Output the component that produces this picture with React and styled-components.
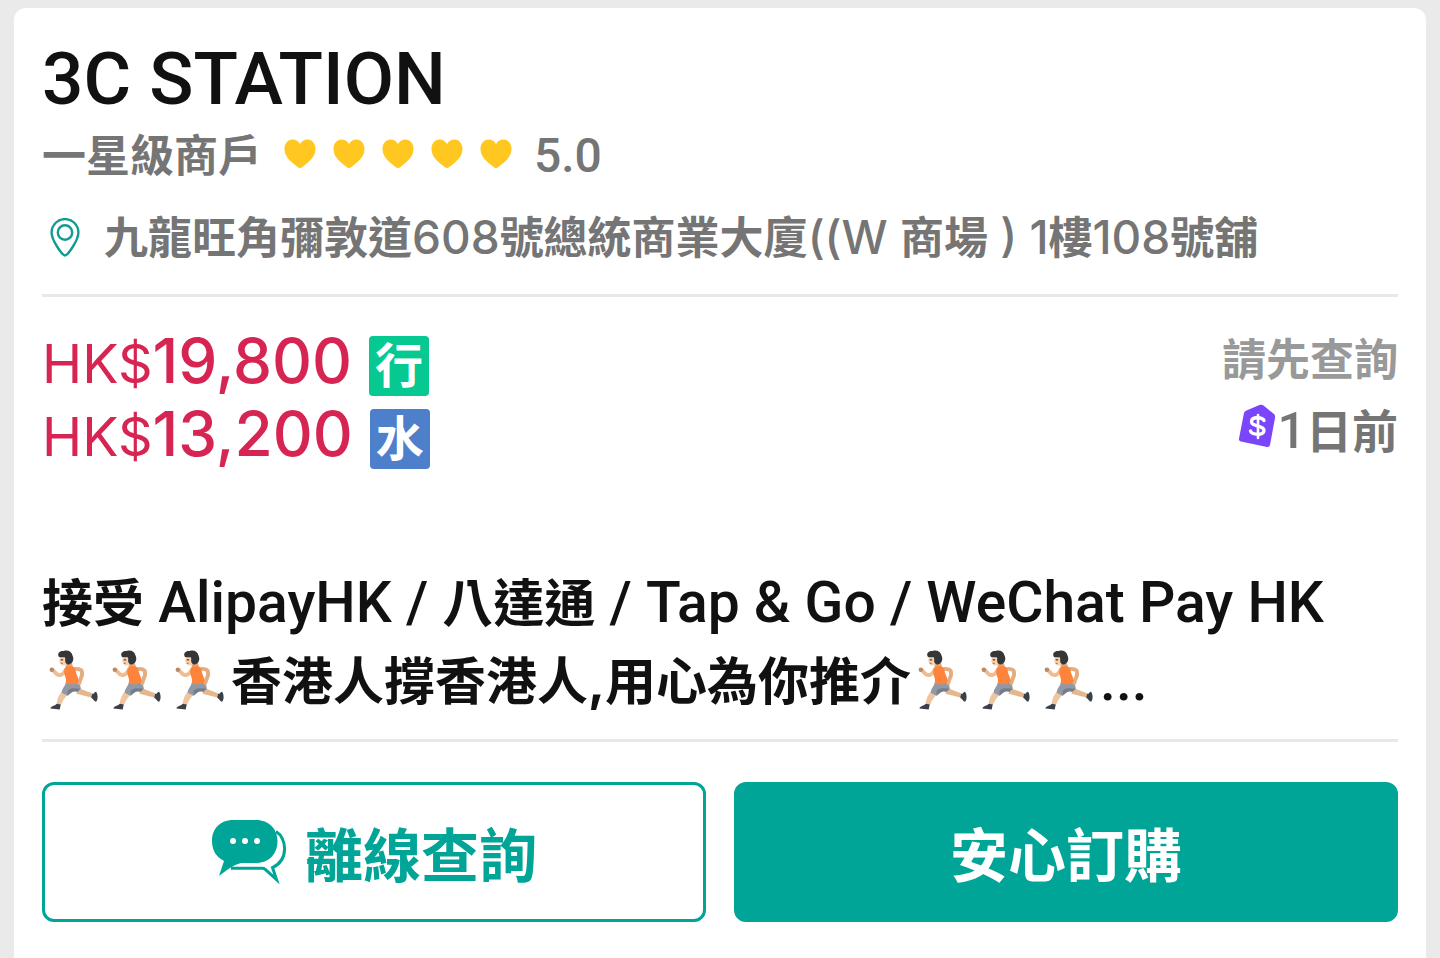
import React from 'react';
import styled, { createGlobalStyle } from 'styled-components';

const App = () => {
  return (
    <>
      <GlobalStyle />
      <Card>
        <Title>3C STATION</Title>
        <RatingRow>
          <span>一星級商戶</span>
          <Hearts role="img" aria-label="5 / 5">
            {[1, 2, 3, 4, 5].map((n) => (
              <HeartIcon key={n} />
            ))}
          </Hearts>
          <Latin $size={48}>5.0</Latin>
        </RatingRow>
        <AddressRow>
          <PinIcon />
          <span>
            九龍旺角彌敦道<AddressLatin>608</AddressLatin>號總統商業大廈
            <AddressLatin>((W </AddressLatin>商場<AddressLatin> ) 1</AddressLatin>樓
            <AddressLatin>108</AddressLatin>號舖
          </span>
        </AddressRow>

        <Divider />

        <PriceSection>
          <div>
            {prices.map((price) => (
              <PriceRow key={price.tag}>
                <span>
                  <Currency>HK$</Currency>
                  {price.amount}
                </span>
                <PriceTag $color={price.color}>{price.tag}</PriceTag>
              </PriceRow>
            ))}
          </div>
          <StockColumn>
            <StockText>請先查詢</StockText>
            <UpdatedText>
              <DollarTagIcon />
              <Latin $size={50}>1</Latin>
              日前
            </UpdatedText>
          </StockColumn>
        </PriceSection>

        <Description>
          接受<Latin $size={57}> AlipayHK / </Latin>八達通
          <Latin $size={57}> / Tap &amp; Go / WeChat Pay HK</Latin>
          <br />
          <RunnerIcon />
          <RunnerIcon />
          <RunnerIcon />
          香港人撐香港人,用心為你推介
          <RunnerIcon />
          <RunnerIcon />
          <RunnerIcon />
          <Latin $size={57}>...</Latin>
        </Description>

        <Divider />

        <Actions>
          <ActionButton type="button">
            <ChatIcon />
            離線查詢
          </ActionButton>
          <ActionButton type="button" $primary>
            安心訂購
          </ActionButton>
        </Actions>
      </Card>
    </>
  );
};

export default App;

const prices = [
  { amount: '19,800', tag: '行', color: '#05c990' },
  { amount: '13,200', tag: '水', color: '#4d7fcb' },
];

const HeartIcon = () => (
  <svg width="32" height="30" viewBox="0 0 32 30" aria-hidden="true">
    <path
      d="M16 29C14.500 29 12 27 8 23.500C3 19 .5 15 .5 9.500C.5 4.500 4 .5 8.500 .5C12 .5 14.500 2.500 16 5C17.500 2.500 20 .5 23.500 .5C28 .5 31.500 4.500 31.500 9.500C31.500 15 29 19 24 23.500C20 27 17.500 29 16 29Z"
      fill="#ffc720"
    />
  </svg>
);

const PinIcon = () => (
  <svg width="46" height="40" viewBox="0 0 46 40" fill="none" stroke="#109c90" strokeWidth="2.400" aria-hidden="true">
    <path d="M23 37.500C20.500 37.500 9.600 22.500 9.600 14.500A13.400 13.400 0 0 1 36.400 14.500C36.400 22.500 25.500 37.500 23 37.500Z" />
    <circle cx="23" cy="14.500" r="7.200" />
  </svg>
);

const DollarTagIcon = () => (
  <TagSvg viewBox="0 0 40 44" aria-hidden="true">
    <path
      d="M8.500 6.500L22 .8Q24 .3 25.500 1.500L36 10Q37.500 11.500 37 14L32 41Q31.500 43.500 29 43L3 37.500Q.6 37 1 34.500L6 9Q6.500 7.200 8.500 6.500Z"
      fill="#7a45fb"
    />
    <g fill="none" stroke="#fff" strokeWidth="3.400" strokeLinecap="round">
      <path d="M26 16.500C24.500 13.500 14 12 13.500 17.500C13 23 26 20.500 26 26.500C26 32 14 31 12.500 27" />
      <path d="M20 11V34" strokeWidth="2.600" />
    </g>
  </TagSvg>
);

const RunnerIcon = () => (
  <Runner viewBox="0 0 64 64" role="img" aria-label="🏃🏻">
    <path d="M37 40L52 46L51 50L35 46Z" fill="#e5b78c" />
    <path d="M51 46C53 47 53 44 55 44C57 47 57 52 55 54C53 54 52 51 50 50Z" fill="#3a4048" />
    <path d="M21 43L27 46C23 50 21 53 19 58L15 57C15 52 17 47 21 43Z" fill="#efc59e" />
    <path d="M15 56L19 57L18 62L8.500 61C9 58 13 58.500 15 56Z" fill="#3a4048" />
    <path d="M24 35L38 34L39.500 41L36 44C31 42 29 46 26 48L20 45C20 41 23 39 24 35Z" fill="#9198a6" />
    <path d="M26 43C30 39 35 41 39 41L36 44C31 42 29 46 26 48Z" fill="#757c8a" />
    <path d="M24 22C21 27 18 28 15 26L11 22" fill="none" stroke="#efbd91" strokeWidth="4" strokeLinecap="round" strokeLinejoin="round" />
    <circle cx="10" cy="21.500" r="2.300" fill="#b98a66" />
    <path d="M24 14L30 14L32 20L24 21Z" fill="#dca77c" />
    <path d="M33 21C37 20 41 22 40.500 24C42 28 38 31 38 35" fill="none" stroke="#e4ad80" strokeWidth="4" strokeLinecap="round" strokeLinejoin="round" />
    <path d="M23 20C26 17 32 17 34 21C34 26 38 30 37 34C33 37 28 37 24 35C26 30 21 27 23 20Z" fill="#ff843b" />
    <path d="M18.500 7L27 7V14C25 17.500 20 18.500 19 16L17.500 13Z" fill="#f8d3ae" />
    <path d="M16.500 6.500C16 4 19 2 22 2.500C26 1 30 3 31 7C33 11 31 15 28 16C25.500 17 23.500 15 23.500 12.500C23.500 11 24 10 23 9C21 9 20 9 19 9C17.500 9 16.500 8 16.500 6.500Z" fill="#34363a" />
    <path d="M19 11.500H21.500" stroke="#473329" strokeWidth="1.200" />
    <path d="M19 15H21" stroke="#c0504a" strokeWidth="1" />
  </Runner>
);

const ChatIcon = () => (
  <svg width="76" height="66" viewBox="0 0 76 66" aria-hidden="true">
    <path
      d="M65 12.500C76 19 78 41 61.500 48.500L65.500 60.500L54 50.200Q53 49.200 51.500 49.200H20"
      fill="none"
      stroke="#00a598"
      strokeWidth="3"
    />
    <path
      d="M22 1H45C58 1 66.500 10 66.500 22C66.500 35 58 44 45 44H30C22 46 16 51 8 57L13 42C5 38 1 31 1 22C1 10 9 1 22 1Z"
      fill="#00a598"
    />
    <circle cx="22" cy="22" r="3" fill="#fff" />
    <circle cx="34" cy="22" r="3" fill="#fff" />
    <circle cx="46" cy="22" r="3" fill="#fff" />
  </svg>
);

const GlobalStyle = createGlobalStyle`
  * {
    box-sizing: border-box;
  }

  body {
    margin: 0;
    background: #eaeaea;
    color: #111;
    font-family: Inter, "Noto Sans CJK TC", sans-serif;
    font-weight: 700;
  }
`;

const Card = styled.main`
  min-height: calc(100vh - 8px);
  margin: 8px 14px 0;
  padding: 27px 28px 36px;
  border-radius: 12px 12px 0 0;
  background: #fff;
`;

const Title = styled.h1`
  margin: 0;
  font-family: Roboto, sans-serif;
  font-size: 73px;
  line-height: 88px;
  font-weight: 500;
`;

const Latin = styled.span`
  font-family: Roboto, sans-serif;
  font-size: ${(props) => props.$size}px;
  font-weight: 500;
  line-height: 1;
`;

const AddressLatin = styled.span`
  font-size: 46px;
  font-weight: 500;
  line-height: 1;
`;

const RatingRow = styled.div`
  display: flex;
  align-items: center;
  color: #757575;
  font-size: 44px;
  line-height: 66px;
`;

const Hearts = styled.div`
  display: flex;
  gap: 17px;
  margin: 0 22px 4px;
`;

const AddressRow = styled.div`
  display: flex;
  align-items: center;
  gap: 16px;
  margin: 16px 0 23px;
  color: #757575;
  font-size: 44px;
  line-height: 66px;
`;

const Divider = styled.hr`
  height: 3px;
  margin: 0;
  border: none;
  background: #e8e8e8;
`;

const PriceSection = styled.section`
  display: flex;
  justify-content: space-between;
  margin-top: 27px;
  line-height: 73px;
`;

const PriceRow = styled.div`
  display: flex;
  align-items: baseline;
  gap: 17px;
  color: #d72553;
  font-size: 62px;
  font-weight: 500;
`;

const Currency = styled.span`
  font-size: 54px;
  font-weight: 400;
  line-height: 1;
`;

const PriceTag = styled.span`
  width: 60px;
  height: 60px;
  border-radius: 4px;
  background: ${(props) => props.$color};
  color: #fff;
  font-size: 48px;
  font-weight: 700;
  line-height: 60px;
  text-align: center;
`;

const StockColumn = styled.div`
  display: flex;
  flex-direction: column;
  align-items: flex-end;
`;

const StockText = styled.span`
  color: #999;
  font-size: 44px;
`;

const UpdatedText = styled.span`
  display: flex;
  align-items: center;
  color: #757575;
  font-size: 46px;
  line-height: 68px;
`;

const TagSvg = styled.svg`
  width: 40px;
  height: 44px;
  margin-bottom: 10px;
`;

const Description = styled.p`
  margin: 95px 0 18px;
  font-size: 51px;
  line-height: 78px;
`;

const Runner = styled.svg`
  width: 63px;
  height: 64px;
  vertical-align: -12px;
`;

const Actions = styled.div`
  display: grid;
  grid-template-columns: 1fr 1fr;
  gap: 28px;
  margin-top: 40px;
`;

const ActionButton = styled.button`
  display: flex;
  align-items: center;
  justify-content: center;
  gap: 18px;
  height: 140px;
  border: 3px solid #00a598;
  border-radius: 12px;
  background: ${(props) => (props.$primary ? '#00a598' : '#fff')};
  color: ${(props) => (props.$primary ? '#fff' : '#00a598')};
  font-family: inherit;
  font-size: 58px;
  font-weight: 700;
  cursor: pointer;
`;
